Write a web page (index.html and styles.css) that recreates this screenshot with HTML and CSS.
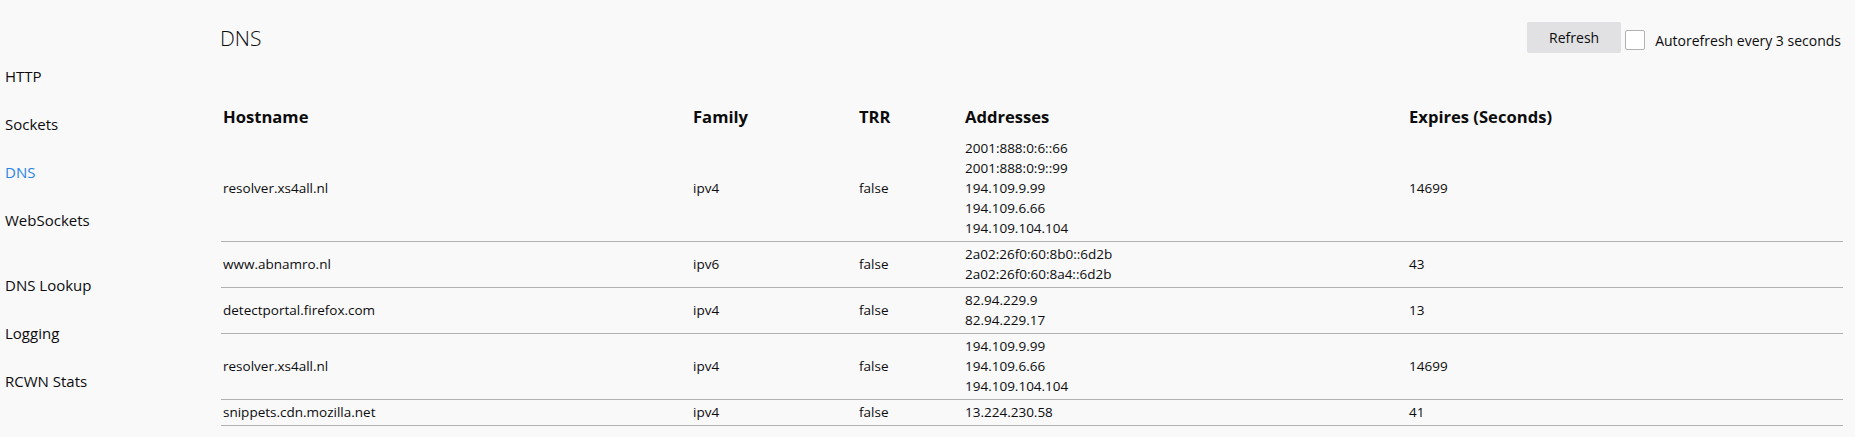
FILE: index.html
```html
<!DOCTYPE html>
<html>
<head>
<meta charset="utf-8">
<title>Networking</title>
<link rel="stylesheet" href="styles.css">
</head>
<body>
<div class="page">
  <nav class="sidebar">
    <div class="group">
      <div class="cat">HTTP</div>
      <div class="cat">Sockets</div>
      <div class="cat selected">DNS</div>
      <div class="cat">WebSockets</div>
    </div>
    <div class="group second">
      <div class="cat">DNS Lookup</div>
      <div class="cat">Logging</div>
      <div class="cat">RCWN Stats</div>
    </div>
  </nav>
  <main class="main">
    <div class="topbar">
      <h1 class="title">DNS</h1>
      <div class="controls">
        <button class="btn" type="button">Refresh</button>
        <input class="chk" type="checkbox" id="autorefresh">
        <label class="chk-label" for="autorefresh">Autorefresh every 3 seconds</label>
      </div>
    </div>
    <table class="dns">
      <colgroup>
        <col class="c-host">
        <col class="c-family">
        <col class="c-trr">
        <col class="c-addr">
        <col class="c-exp">
      </colgroup>
      <thead>
        <tr>
          <th>Hostname</th>
          <th>Family</th>
          <th>TRR</th>
          <th>Addresses</th>
          <th>Expires (Seconds)</th>
        </tr>
      </thead>
      <tbody>
        <tr>
          <td>resolver.xs4all.nl</td>
          <td>ipv4</td>
          <td>false</td>
          <td>2001:888:0:6::66<br>2001:888:0:9::99<br>194.109.9.99<br>194.109.6.66<br>194.109.104.104</td>
          <td>14699</td>
        </tr>
        <tr>
          <td>www.abnamro.nl</td>
          <td>ipv6</td>
          <td>false</td>
          <td>2a02:26f0:60:8b0::6d2b<br>2a02:26f0:60:8a4::6d2b</td>
          <td>43</td>
        </tr>
        <tr>
          <td>detectportal.firefox.com</td>
          <td>ipv4</td>
          <td>false</td>
          <td>82.94.229.9<br>82.94.229.17</td>
          <td>13</td>
        </tr>
        <tr>
          <td>resolver.xs4all.nl</td>
          <td>ipv4</td>
          <td>false</td>
          <td>194.109.9.99<br>194.109.6.66<br>194.109.104.104</td>
          <td>14699</td>
        </tr>
        <tr>
          <td>snippets.cdn.mozilla.net</td>
          <td>ipv4</td>
          <td>false</td>
          <td>13.224.230.58</td>
          <td>41</td>
        </tr>
      </tbody>
    </table>
  </main>
</div>
</body>
</html>
```
FILE: styles.css
```css
html, body {
  margin: 0;
  padding: 0;
  background: #f9f9fa;
}

body {
  font-family: "Open Sans", "Noto Sans", "Liberation Sans", sans-serif;
  color: #0c0c0d;
}

.page {
  display: flex;
  min-height: 437px;
}

.sidebar {
  width: 221px;
  flex: none;
  box-sizing: border-box;
  padding: 52px 0 0 5px;
}

.group.second {
  margin-top: 17px;
}

.cat {
  height: 48px;
  line-height: 48px;
  font-size: 15px;
  color: #0c0c0d;
  white-space: nowrap;
}

.cat.selected {
  color: #2a86e6;
}

.main {
  flex: 1;
  min-width: 0;
  padding: 22px 12px 0 0;
}

.topbar {
  display: flex;
  justify-content: space-between;
  align-items: flex-start;
}

.title {
  margin: 1px 0 0 -1px;
  font-size: 21px;
  font-weight: 300;
  line-height: 30px;
  color: #0c0c0d;
}

.controls {
  display: flex;
  align-items: flex-start;
  margin-right: 2px;
}

.btn {
  height: 31px;
  margin: 0;
  padding: 1px 22px 0;
  border: none;
  border-radius: 2px;
  background: #e1e1e4;
  font-family: inherit;
  font-size: 14px;
  line-height: 30px;
  color: #0c0c0d;
}

.chk {
  -webkit-appearance: none;
  appearance: none;
  width: 20px;
  height: 20px;
  margin: 8px 10px 0 4px;
  border: 1px solid #b1b1b3;
  border-radius: 2px;
  background: #fff;
  box-sizing: border-box;
}

.chk-label {
  margin-top: 9px;
  font-size: 14px;
  line-height: 20px;
  white-space: nowrap;
}

.dns {
  width: 100%;
  margin-top: 54px;
  border-collapse: collapse;
  table-layout: fixed;
}

.c-host { width: 470px; }
.c-family { width: 166px; }
.c-trr { width: 106px; }
.c-addr { width: 444px; }
.c-exp { width: auto; }

.dns th {
  padding: 0 2px 9px;
  font-size: 16.6px;
  font-weight: 700;
  line-height: 20px;
  text-align: left;
  color: #0c0c0d;
  white-space: nowrap;
}

.dns td {
  padding: 2px 2px 3px;
  font-size: 13.5px;
  line-height: 20px;
  vertical-align: middle;
  white-space: nowrap;
}

.dns tbody tr {
  border-bottom: 1px solid #b1b1b3;
}
```
